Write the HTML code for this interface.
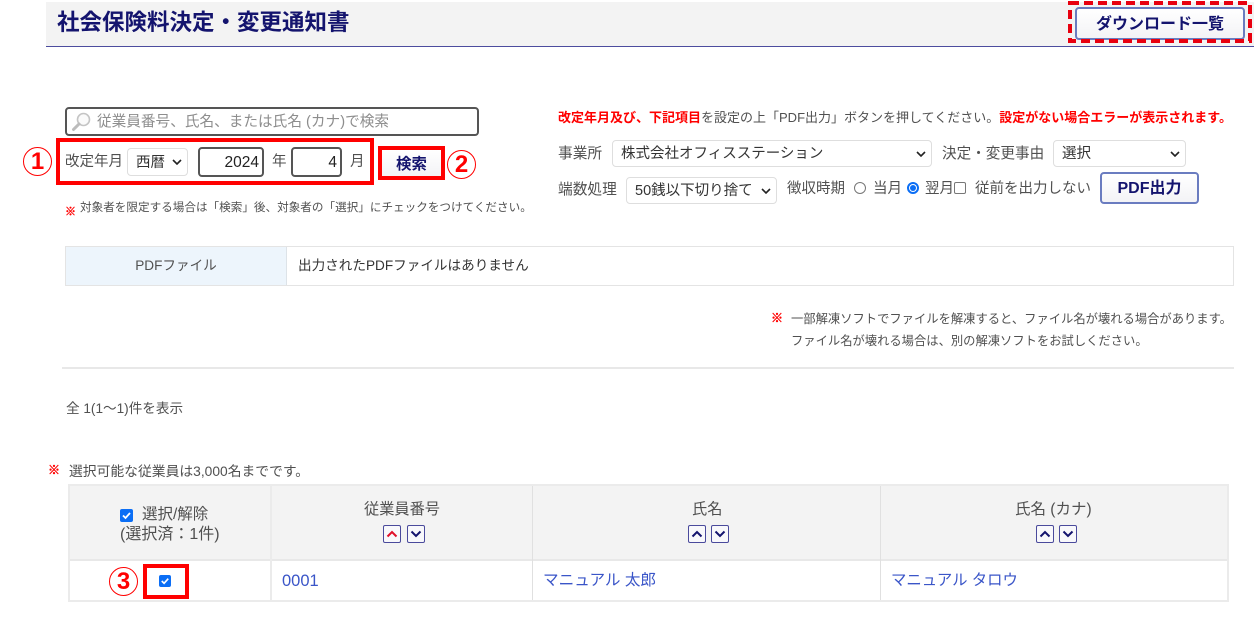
<!DOCTYPE html>
<html lang="ja"><head><meta charset="utf-8"><title>社会保険料決定・変更通知書</title>
<style>
html,body{margin:0;padding:0;background:#fff}
body{width:1254px;height:626px;position:relative;overflow:hidden;font-family:"Liberation Sans","Noto Sans CJK JP",sans-serif;color:#505050;font-size:14.5px}
.a{position:absolute;box-sizing:border-box}
.t{position:absolute;white-space:nowrap;line-height:20px;height:20px}
.red{color:#f00;font-weight:bold}
.kome{position:absolute;white-space:nowrap;line-height:20px;height:20px;color:#f00;font-weight:bold;font-family:"Noto Sans CJK JP",sans-serif;-webkit-text-stroke:.5px #f00}
.btn{position:absolute;box-sizing:border-box;background:linear-gradient(#fff,#f3f3f6);border:2px solid #6a7cc0;border-radius:4px;color:#14146e;font-weight:bold;text-align:center;white-space:nowrap}
.sel{position:absolute;box-sizing:border-box;background:#fff;border:1px solid #dedede;border-radius:4px;color:#333;white-space:nowrap;padding-left:8px;font-size:14.5px}
.sel svg{position:absolute;right:5px;top:50%;margin-top:-3px}
.inp{position:absolute;box-sizing:border-box;background:#fff;border:2px solid #555;border-radius:4px;color:#222;text-align:right;padding-right:3px;font-size:15.500px}
.rb{position:absolute;border:4px solid #f00;box-sizing:border-box}
.num{position:absolute;box-sizing:border-box;width:29px;height:29px;border:1px solid #f00;border-radius:50%;color:#f00;font-weight:bold;font-size:24px;line-height:27px;text-align:center;font-family:"Liberation Sans",sans-serif}
.cb{position:absolute;width:13px;height:13px;background:#0b6ef5;border-radius:2px}
.cb svg{display:block}
.sort{position:absolute;box-sizing:border-box;width:18px;height:18px;border:1px solid #4a4a9c;border-radius:2px;background:#f8f8fb}
.sort svg{display:block}
.lk{color:#3a55c8}
</style></head><body>

<div class="a" style="left:46px;top:2px;width:1208px;height:45px;background:#f3f3f3;border-bottom:1px solid #4c4c9e"></div>
<div class="t" style="left:57px;top:10px;font-size:22.500px;line-height:26px;height:26px;font-weight:bold;color:#14146e">社会保険料決定・変更通知書</div>
<div class="btn" style="left:1075px;top:7px;width:170px;height:33px;font-size:16px;line-height:31px">ダウンロード一覧</div>
<svg class="a" style="left:1066px;top:0" width="188" height="46" viewBox="0 0 188 46"><rect x="4" y="3" width="180" height="38" fill="none" stroke="#e8000f" stroke-width="4" stroke-dasharray="9 5"/></svg>

<!-- search -->
<div class="a" style="left:65px;top:107px;width:414px;height:29px;border:2px solid #555;border-radius:4px;background:#fff"></div>
<svg class="a" style="left:71px;top:112px" width="22" height="20" viewBox="0 0 22 20"><circle cx="12.500" cy="7.500" r="6" fill="#fafafa" stroke="#c4c4c4" stroke-width="1.600"/><path d="M8 12L2.500 17.500" stroke="#bcbcbc" stroke-width="3" stroke-linecap="round"/></svg>
<div class="t" style="left:97px;top:112px;font-size:14.650px;color:#8d8d8d">従業員番号、氏名、または氏名 (カナ)で検索</div>

<div class="t" style="left:65px;top:152px">改定年月</div>
<div class="sel" style="left:127px;top:148px;width:61px;height:28px;line-height:28px">西暦<svg width="10" height="6" viewBox="0 0 10 6"><path d="M1 1l4 4 4-4" fill="none" stroke="#222" stroke-width="1.600"/></svg></div>
<div class="inp" style="left:198px;top:147px;width:66px;height:30px;line-height:28px">2024</div>
<div class="t" style="left:272px;top:152px">年</div>
<div class="inp" style="left:291px;top:147px;width:51px;height:30px;line-height:28px">4</div>
<div class="t" style="left:350px;top:152px">月</div>
<div class="rb" style="left:56px;top:138px;width:318px;height:47px"></div>
<div class="num" style="left:23px;top:147px">1</div>

<div class="a" style="left:378px;top:146px;width:67px;height:34px;border:4px solid #f00;background:linear-gradient(#fff,#f3f3f6);color:#14146e;font-weight:bold;text-align:center;line-height:29px;font-size:15.500px">検索</div>
<div class="num" style="left:447px;top:150px">2</div>

<div class="kome" style="left:65px;top:201px;font-size:11px">※</div>
<div class="t" style="left:80px;top:198px;font-size:11.600px">対象者を限定する場合は「検索」後、対象者の「選択」にチェックをつけてください。</div>

<!-- right form -->
<div class="t" style="left:558px;top:108px;font-size:13px"><span class="red">改定年月及び、下記項目</span>を設定の上「PDF出力」ボタンを押してください。<span class="red">設定がない場合エラーが表示されます。</span></div>
<div class="t" style="left:558px;top:144px;font-size:14.700px">事業所</div>
<div class="sel" style="left:612px;top:140px;width:320px;height:27px;line-height:27px">株式会社オフィスステーション<svg width="10" height="6" viewBox="0 0 10 6"><path d="M1 1l4 4 4-4" fill="none" stroke="#222" stroke-width="1.600"/></svg></div>
<div class="t" style="left:942px;top:144px;font-size:14.600px">決定・変更事由</div>
<div class="sel" style="left:1053px;top:140px;width:133px;height:27px;line-height:27px">選択<svg width="10" height="6" viewBox="0 0 10 6"><path d="M1 1l4 4 4-4" fill="none" stroke="#222" stroke-width="1.600"/></svg></div>

<div class="t" style="left:558px;top:180px;font-size:14.700px">端数処理</div>
<div class="sel" style="left:626px;top:177px;width:151px;height:27px;line-height:26px">50銭以下切り捨て<svg width="10" height="6" viewBox="0 0 10 6"><path d="M1 1l4 4 4-4" fill="none" stroke="#222" stroke-width="1.600"/></svg></div>
<div class="t" style="left:787px;top:179px">徴収時期</div>
<div class="a" style="left:854px;top:182px;width:12px;height:12px;border:1px solid #777;border-radius:50%"></div>
<div class="t" style="left:873px;top:179px">当月</div>
<div class="a" style="left:907px;top:182px;width:12px;height:12px;border:2px solid #0b6ef5;border-radius:50%;background:#fff"></div>
<div class="a" style="left:910px;top:185px;width:6px;height:6px;background:#0b6ef5;border-radius:50%"></div>
<div class="t" style="left:925px;top:179px">翌月</div>
<div class="a" style="left:954px;top:182px;width:12px;height:12px;border:1px solid #777;border-radius:2px;background:#fff"></div>
<div class="t" style="left:975px;top:179px">従前を出力しない</div>
<div class="btn" style="left:1100px;top:172px;width:99px;height:32px;font-size:16px;line-height:30px">PDF出力</div>

<!-- pdf table -->
<div class="a" style="left:65px;top:246px;width:1169px;height:40px;border:1px solid #e4e4e4;background:#fff"></div>
<div class="a" style="left:66px;top:247px;width:221px;height:38px;background:#edf5fc;border-right:1px solid #dde3e8;text-align:center;line-height:38px;font-size:13.600px">PDFファイル</div>
<div class="t" style="left:298px;top:256px;font-size:13.600px;color:#333">出力されたPDFファイルはありません</div>

<div class="kome" style="left:771px;top:308px;font-size:12px">※</div>
<div class="t" style="left:791px;top:309px;font-size:12.300px">一部解凍ソフトでファイルを解凍すると、ファイル名が壊れる場合があります。</div>
<div class="t" style="left:791px;top:331px;font-size:12.300px">ファイル名が壊れる場合は、別の解凍ソフトをお試しください。</div>

<div class="a" style="left:62px;top:367px;width:1172px;height:2px;background:#e8e8e8"></div>
<div class="t" style="left:66px;top:399px;font-size:13.600px">全 1(1～1)件を表示</div>

<div class="kome" style="left:48px;top:460px;font-size:12px">※</div>
<div class="t" style="left:69px;top:462px;font-size:13.800px">選択可能な従業員は3,000名までです。</div>

<!-- main table -->
<div class="a" style="left:68px;top:484px;width:1161px;height:118px;border:2px solid #ebebeb;background:#fff"></div>
<div class="a" style="left:70px;top:486px;width:1157px;height:75px;background:#f3f3f3;border-bottom:2px solid #e8e8e8"></div>
<div class="a" style="left:270px;top:486px;width:2px;height:114px;background:#ebebeb"></div>
<div class="a" style="left:532px;top:486px;width:1px;height:114px;background:#e0e0e0"></div>
<div class="a" style="left:880px;top:486px;width:1px;height:114px;background:#e0e0e0"></div>

<div class="cb" style="left:120px;top:509px"><svg width="13" height="13" viewBox="0 0 13 13"><path d="M3 6.500l2.500 2.500 4.500-5" fill="none" stroke="#fff" stroke-width="1.800"/></svg></div>
<div class="t" style="left:142px;top:505px;font-size:15.500px">選択/解除</div>
<div class="t" style="left:120px;top:525px;font-size:16px">(選択済：1件)</div>

<div class="t" style="left:364px;top:500px;font-size:15.200px">従業員番号</div>
<div class="sort" style="left:383px;top:525px"><svg width="16" height="16" viewBox="0 0 16 16"><path d="M3.500 10.500L8 6l4.500 4.500" fill="none" stroke="#e0102a" stroke-width="2"/></svg></div>
<div class="sort" style="left:407px;top:525px"><svg width="16" height="16" viewBox="0 0 16 16"><path d="M3.500 5.500L8 10l4.500-4.500" fill="none" stroke="#14146e" stroke-width="2"/></svg></div>

<div class="t" style="left:692px;top:500px;font-size:15.200px">氏名</div>
<div class="sort" style="left:688px;top:525px"><svg width="16" height="16" viewBox="0 0 16 16"><path d="M3.500 10.500L8 6l4.500 4.500" fill="none" stroke="#14146e" stroke-width="2"/></svg></div>
<div class="sort" style="left:711px;top:525px"><svg width="16" height="16" viewBox="0 0 16 16"><path d="M3.500 5.500L8 10l4.500-4.500" fill="none" stroke="#14146e" stroke-width="2"/></svg></div>

<div class="t" style="left:1015px;top:500px;font-size:15.500px">氏名 (カナ)</div>
<div class="sort" style="left:1036px;top:525px"><svg width="16" height="16" viewBox="0 0 16 16"><path d="M3.500 10.500L8 6l4.500 4.500" fill="none" stroke="#14146e" stroke-width="2"/></svg></div>
<div class="sort" style="left:1059px;top:525px"><svg width="16" height="16" viewBox="0 0 16 16"><path d="M3.500 5.500L8 10l4.500-4.500" fill="none" stroke="#14146e" stroke-width="2"/></svg></div>

<div class="num" style="left:109px;top:567px">3</div>
<div class="rb" style="left:143px;top:564px;width:46px;height:35px"></div>
<div class="cb" style="left:159px;top:575px;width:12px;height:12px"><svg width="12" height="12" viewBox="0 0 13 13"><path d="M3 6.500l2.500 2.500 4.500-5" fill="none" stroke="#fff" stroke-width="1.800"/></svg></div>

<div class="t lk" style="left:282px;top:571px;font-size:16.500px">0001</div>
<div class="t lk" style="left:543px;top:571px;font-size:15.600px">マニュアル 太郎</div>
<div class="t lk" style="left:891px;top:571px;font-size:15.400px">マニュアル タロウ</div>

</body></html>
